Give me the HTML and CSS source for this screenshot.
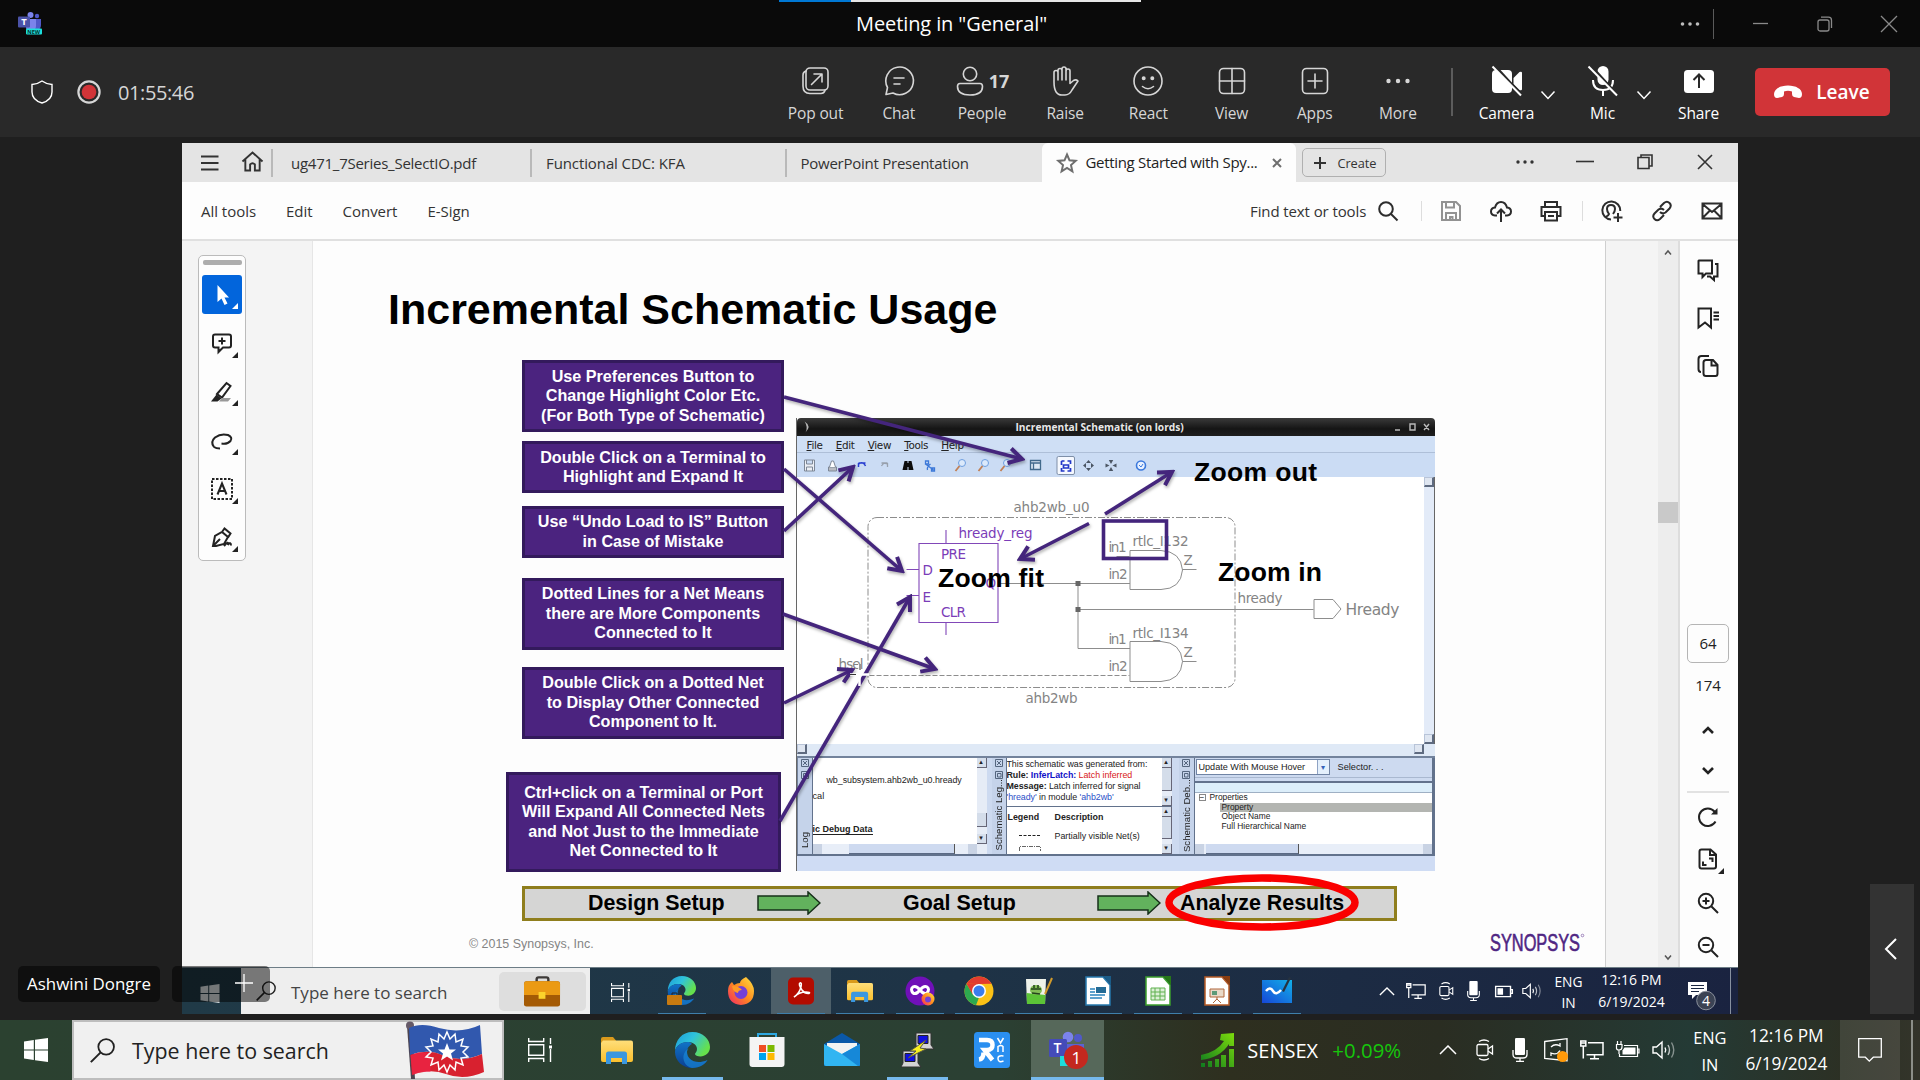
FILE: index.html
```html
<!DOCTYPE html>
<html lang="en">
<head>
<meta charset="utf-8">
<title>Meeting in "General"</title>
<link rel="stylesheet" href="styles.css">
</head>
<body>
<svg class="defs" width="0" height="0">
  <defs>
    <linearGradient id="edgeA" x1="0" y1="0" x2="1" y2="0.5"><stop offset="0" stop-color="#1c9bd8"/><stop offset=".5" stop-color="#2fc3dc"/><stop offset="1" stop-color="#66e04c"/></linearGradient>
    <linearGradient id="edgeB" x1="0" y1="0" x2="0" y2="1"><stop offset="0" stop-color="#1173c7"/><stop offset="1" stop-color="#0b3f91"/></linearGradient>
    <linearGradient id="fold" x1="0" y1="0" x2="0" y2="1"><stop offset="0" stop-color="#ffde7a"/><stop offset="1" stop-color="#fbc02d"/></linearGradient>
    <linearGradient id="fox" x1="1" y1="0" x2="0" y2="1"><stop offset="0" stop-color="#ffe443"/><stop offset=".5" stop-color="#ff8a1f"/><stop offset="1" stop-color="#f0246a"/></linearGradient>
    <linearGradient id="grow" x1="0" y1="1" x2="1" y2="0"><stop offset="0" stop-color="#0e7a1f"/><stop offset="1" stop-color="#7ddc0c"/></linearGradient>
    <linearGradient id="wb" x1="0" y1="1" x2="1" y2="0"><stop offset="0" stop-color="#1646d8"/><stop offset="1" stop-color="#12b0e8"/></linearGradient>
    <symbol id="edge" viewBox="0 0 36 36"><path d="M1 19C1 8 8 0 18.500 0 29 0 36 7.500 36 15c0 6-5 9.500-9.500 9.500-3 0-5.500-1-5.500-2.500 0-1 2-2 2-5 0-4-4-7-9-7C7 10 2 14 1 19z" fill="url(#edgeA)"/><path d="M14 10C6 10 1 15 1 20c0 9 8 16 17 16 8 0 13-4 15.500-8-3 1.500-6 2-9 2-7 0-11.500-4.500-11.500-10 0-4 2.500-6.500 5-8-1-1.500-3-2-4-2z" fill="url(#edgeB)"/><path d="M13 20c0 5.500 4.500 10 11.500 10 3 0 6-.5 9-2-2.500 4-7 8-15.500 8C11 35 8 27 10 22c1-3 3-5 6-6-2 1-3 2.500-3 4z" fill="#1a8fdd" opacity=".6"/></symbol>
    <symbol id="folder" viewBox="0 0 32 27"><path d="M0 2a2 2 0 0 1 2-2h10l3 3.500V8H0z" fill="#d99a1c"/><path d="M2 3.500h28a2 2 0 0 1 2 2V23a2 2 0 0 1-2 2H2a2 2 0 0 1-2-2V6z" fill="url(#fold)"/><path d="M5 27V17a2.500 2.500 0 0 1 2.500-2.500h16A2.500 2.500 0 0 1 26 17v10h-5v-6H10v6z" fill="#3a97e0"/></symbol>
    <symbol id="win" viewBox="0 0 24 24"><path d="M0 3.400 9.800 2v9.500H0zM11 1.800 24 0v11.500H11zM0 12.600h9.800V22L0 20.600zM11 12.600h13V24l-13-1.800z"/></symbol>
    <symbol id="glass" viewBox="0 0 24 24"><circle cx="15.500" cy="8.500" r="7.500" fill="none" stroke="currentColor" stroke-width="1.700"/><path d="M10 14 .8 23.200" stroke="currentColor" stroke-width="1.900"/></symbol>
    <symbol id="taskview" viewBox="0 0 24 24"><g fill="none" stroke="currentColor" stroke-width="1.400"><path d="M.7 0v3.500h15V0M.7 24v-3.500h15V24M.7 6.800h15v10.500H.7z"/><path d="M22.500 0v6M22.500 11v13"/></g><path d="M21 7.500h3v3h-3z" fill="currentColor"/></symbol>
    <symbol id="net" viewBox="0 0 24 24"><g fill="none" stroke="currentColor" stroke-width="1.500"><path d="M8 4.700h15v12H6.500M14.500 17v3.500M10 20.800h9M.8 3h5v5h-5zM3.300 8v12.500M.8 5h5"/></g></symbol>
    <symbol id="cam" viewBox="0 0 18 24"><g fill="none" stroke="currentColor" stroke-width="1.300"><rect x="1" y="6.500" width="11" height="11" rx="1.500"/><path d="m12 11 4.500-3v8L12 13M3 3.500Q8 .5 13 3.500M3 20.500q5 3 10 0"/></g></symbol>
    <symbol id="micro" viewBox="0 0 16 24"><rect x="3" y="0" width="10" height="17" rx="1.200" fill="currentColor"/><path d="M1 12v4.500Q1 20 5 20h6q4 0 4-3.500V12M8 20v3.300M4 23.300h8" fill="none" stroke="currentColor" stroke-width="1.300"/></symbol>
    <symbol id="vol" viewBox="0 0 24 24"><g fill="none" stroke="currentColor" stroke-width="1.400"><path d="M1 9h3.500L10 4v16l-5.500-5H1z"/><path d="M13 9.500q1.500 2.500 0 5"/><path d="M16 7q3 5 0 10" opacity=".7"/><path d="M19.500 4.500q4.500 7.500 0 15" opacity=".45"/></g></symbol>
    <symbol id="up" viewBox="0 0 18 10"><path d="m1 9 8-8 8 8" fill="none" stroke="currentColor" stroke-width="1.500"/></symbol>
    <symbol id="tri" viewBox="0 0 6 6"><path d="M6 0v6H0z" fill="currentColor"/></symbol>
    <symbol id="flow" viewBox="0 0 64 24"><path d="M1 5h50V1l12 11-12 11v-4H1z" fill="#62b25d" stroke="#16301a" stroke-width="1.500"/></symbol>
    <symbol id="dockbox" viewBox="0 0 8 20"><path d="M.5.500h7v7h-7zM2 2l4 4M6 2 2 6M.5 12.500h7v7h-7zM2.500 14.500h3.500v3.500H2.500z" fill="none" stroke="#55667f"/></symbol>
    <marker id="head" viewBox="0 0 20 20" refX="17" refY="10" markerWidth="20" markerHeight="20" markerUnits="userSpaceOnUse" orient="auto"><path d="M4 2.500 17 10 4 17.500" fill="none" stroke="#44257c" stroke-width="4"/></marker>
  </defs>
</svg>

<header class="titlebar">
  <div class="progress"><i></i><b></b></div>
  <svg class="teams-logo" viewBox="0 0 24 23"><circle cx="12.500" cy="3" r="3" fill="#7b83eb"/><circle cx="19" cy="4" r="2.200" fill="#5059c9"/><path d="M12 7h11v6q0 5-5 5h-6z" fill="#5059c9"/><path d="M9 7h9v7q0 5-6 5-3 0-4-3z" fill="#7b83eb"/><rect y="4.500" width="12" height="11" rx="1" fill="#4b53a8"/><text x="3.300" y="12.800" class="logo-t">T</text><rect x="8" y="16.500" width="16" height="6" rx="1" fill="#1ce0dc"/><text x="9.200" y="21.600" class="logo-new">NEW</text></svg>
  <h1>Meeting in "General"</h1>
  <div class="window-controls">
    <svg class="wc-dots" viewBox="0 0 20 6"><circle cx="2.500" cy="3" r="1.800"/><circle cx="10" cy="3" r="1.800"/><circle cx="17.500" cy="3" r="1.800"/></svg>
    <i class="wc-sep"></i>
    <svg class="wc" viewBox="0 0 16 16"><path d="M0 7.500h15"/></svg>
    <svg class="wc" viewBox="0 0 16 16"><rect x="1" y="4" width="11" height="11" rx="2"/><path d="M4 1.200h7.500q3 0 3 3V12"/></svg>
    <svg class="wc" viewBox="0 0 16 16"><path d="m0 0 16 16M16 0 0 16"/></svg>
  </div>
</header>

<div class="callbar">
  <div class="call-state">
    <svg class="shield" viewBox="0 0 22 24"><path d="M11 1Q6 4.500 1 4.500V12q0 8 10 11 10-3 10-11V4.500Q16 4.500 11 1z"/></svg>
    <svg class="rec" viewBox="0 0 24 24"><circle cx="12" cy="12" r="10.600" fill="none" stroke="#d6d6d6" stroke-width="2.200"/><circle cx="12" cy="12" r="7.300" fill="#d13438"/></svg>
    <time>01:55:46</time>
  </div>
  <nav class="call-actions">
    <button><svg viewBox="0 0 30 30"><rect x="5" y="2" width="22" height="22" rx="4"/><path d="M5 5Q2 6 2 9v11q0 7.500 7 7.500h11q3 0 4-3M10.500 18.500 21 8M13 8h8v8"/></svg><span>Pop out</span></button>
    <button><svg viewBox="0 0 30 30"><path d="M3.500 21.500A13.800 13.800 0 1 1 9 27l-7 1.500z"/><path d="M10 12h10M10 18h6"/></svg><span>Chat</span></button>
    <button><span class="with-count"><svg viewBox="0 0 30 30"><circle cx="15" cy="8" r="6.700"/><path d="M5 17.500h20q2.500 0 2.500 3Q27.500 29 15 29T2.500 20.500q0-3 2.500-3z"/></svg><b>17</b></span><span>People</span></button>
    <button><svg viewBox="0 0 30 30"><path d="M4 16V6.500a2 2 0 0 1 4 0V14 4.500a2 2 0 0 1 4 0V14 3a2 2 0 0 1 4 0v11V5a2 2 0 0 1 4 0v12.500l3.500-3q2.500-1.500 4.500.5-3 4.500-6 9-2.500 5-7 5h-3Q4 29 4 16z"/></svg><span>Raise</span></button>
    <button><svg viewBox="0 0 30 30"><circle cx="15" cy="15" r="14"/><path d="M9.500 20.500q5.500 4.500 11 0"/><circle cx="10.700" cy="12.200" r="1.200" class="solid"/><circle cx="19.300" cy="12.200" r="1.200" class="solid"/></svg><span>React</span></button>
    <button><svg viewBox="0 0 30 30"><rect x="2.500" y="2.500" width="25" height="25" rx="4"/><path d="M15 2.500v25M2.500 15h25"/></svg><span>View</span></button>
    <button><svg viewBox="0 0 30 30"><rect x="2.500" y="2.500" width="25" height="25" rx="4"/><path d="M15 8v14M8 15h14"/></svg><span>Apps</span></button>
    <button><svg viewBox="0 0 30 30"><g class="solid"><circle cx="5.500" cy="15" r="1.400"/><circle cx="15" cy="15" r="1.400"/><circle cx="24.500" cy="15" r="1.400"/></g></svg><span>More</span></button>
  </nav>
  <i class="call-sep"></i>
  <div class="devices">
    <button class="dev"><svg viewBox="0 0 30 30"><rect x="0" y="4" width="20" height="23" rx="4" class="fill"/><path d="m21.500 12 6-6q2.500-1 2.500 1v16q0 2-2.500 1l-6-6z" class="fill"/><path d="M2 -1 31 31" class="gap"/><path d="m.5.500 28.500 29"/></svg><span>Camera</span></button>
    <svg class="chev" viewBox="0 0 14 8"><path d="m.5.500 6.500 7 6.500-7"/></svg>
    <button class="dev"><svg viewBox="0 0 30 30"><rect x="9.500" y="0" width="11" height="19" rx="5.500" class="fill"/><path d="M5 14q0 10 10 10t10-10M15 24v6"/><path d="M2 -1 31 31" class="gap"/><path d="m.5.500 28.500 29"/></svg><span>Mic</span></button>
    <svg class="chev" viewBox="0 0 14 8"><path d="m.5.500 6.500 7 6.500-7"/></svg>
    <button class="dev"><svg viewBox="0 0 30 30"><rect x="0" y="4" width="30" height="23" rx="3.500" class="fill"/><path d="M15 22V9M9.500 14 15 8.500l5.500 5.500" class="dark"/></svg><span>Share</span></button>
  </div>
  <button class="leave"><svg viewBox="0 0 28 14"><path d="M14 .5C22 .5 28 4 28 9q0 4-3 4l-5-1q-2-.5-2-3V6.500q-4-1.500-8 0V9q0 2.500-2 3l-5 1q-3 0-3-4C0 4 6 .5 14 .5z"/></svg>Leave</button>
</div>

<main class="stage">
  <section class="shared">
    <div class="tabs">
      <svg class="burger" viewBox="0 0 18 16"><path d="M0 1.500h17.500M0 8h17.500M0 14.500h17.500"/></svg>
      <svg class="home" viewBox="0 0 24 22"><path d="M1.500 11 12 1.500 22.500 11M4.500 9v11.500H9.500V14q2.500-2.500 5 0v6.500h5V9"/></svg>
      <div class="tab t1">ug471_7Series_SelectIO.pdf</div>
      <div class="tab t2">Functional CDC: KFA</div>
      <div class="tab t3">PowerPoint Presentation</div>
      <div class="tab active"><svg class="star" viewBox="0 0 20 20"><path d="m10 1.500 2.500 5.800 6.200.6-4.700 4.200 1.400 6.200L10 15l-5.400 3.300L6 12.100 1.300 7.900l6.200-.6z"/></svg><span>Getting Started with Spy...</span><svg class="tab-x" viewBox="0 0 10 10"><path d="m1 1 8 8M9 1 1 9"/></svg></div>
      <div class="create"><svg viewBox="0 0 12 12"><path d="M6 0v12M0 6h12"/></svg>Create</div>
      <div class="pdf-wc">
        <svg viewBox="0 0 18 16"><g class="dots"><circle cx="2" cy="8" r="1.700"/><circle cx="9" cy="8" r="1.700"/><circle cx="16" cy="8" r="1.700"/></g></svg>
        <svg viewBox="0 0 18 16"><path d="M0 7.500h18"/></svg>
        <svg viewBox="0 0 18 16"><path d="M2 3.500h11v11H2zM5 3.500v-2.500h11v11h-3"/></svg>
        <svg viewBox="0 0 18 16"><path d="m2 1 14 14M16 1 2 15"/></svg>
      </div>
    </div>
    <div class="toolbar">
      <div class="tb-menu"><span>All tools</span><span>Edit</span><span>Convert</span><span>E-Sign</span></div>
      <div class="find">Find text or tools<svg viewBox="0 0 20 20"><circle cx="8" cy="8" r="6.800"/><path d="m13 13 6.500 6.500"/></svg></div>
      <i class="tb-sep s1"></i>
      <div class="tb-icons g1">
        <svg class="muted" viewBox="0 0 22 22"><path d="M2 2h14l4 4v14H2zM6 2v5.500h8V2M6 20v-7h10v7M10 20v-3h2.500v3"/></svg>
        <svg viewBox="0 0 22 22"><path d="M7 15.500H5Q1 15 1 11.500q0-3.500 4-4Q6.500 2 11 2t6 5.500q4 .5 4 4 0 3.500-4 4h-2M11 22V10M7 13.500l4-4 4 4"/></svg>
        <svg viewBox="0 0 22 22"><path d="M5 16H1.500V7h19v9H17M5 7V2h12v5M5 12h12v8.500H5zM8 16h6"/></svg>
      </div>
      <i class="tb-sep s2"></i>
      <div class="tb-icons g2">
        <svg viewBox="0 0 22 22"><path d="M10 19.500A9 9 0 1 1 19.300 11M4.500 17q3-1 3.500-3-2-2.500-2-5 0-4 4-4t4 4q0 2.500-2 5M17 13v9M12.500 17.500h9"/></svg>
        <svg viewBox="0 0 22 22"><path d="m9 7 4-4q3-2.500 5.500 0t0 5.500l-4 4q-3 2-5.500-.5M13 15l-4 4q-3 2.500-5.500 0t0-5.500l4-4q3-2 5.500.5"/></svg>
        <svg viewBox="0 0 22 22"><path d="M1.500 3.500h19v15h-19zM1.500 4 11 12l9.500-8M1.500 18l7-7M20.500 18l-7-7"/></svg>
      </div>
    </div>
    <div class="body">
      <aside class="gutter">
        <div class="toolbox">
          <i class="grip"></i>
          <div class="tool on"><svg viewBox="0 0 22 22"><path d="M6.500 1v17l4-3.500 3 6.500 3-1.500-3-6H18z" class="solid"/></svg><svg class="more"><use href="#tri"/></svg></div>
          <div class="tool"><svg viewBox="0 0 22 22"><path d="M4 2.500h14q2 0 2 2v9q0 2-2 2h-6L7.500 20v-4.500H4q-2 0-2-2v-9q0-2 2-2zM11 5.500v7M7.500 9h7"/></svg><svg class="more"><use href="#tri"/></svg></div>
          <div class="tool"><svg viewBox="0 0 22 22"><path d="M6 13 15.500 2l4 3L11 16.500z"/><path d="m5.500 13.500 5 4-4 3H0z" class="solid"/><path d="M11 17h9l-3 3.500H8z" fill="#999" stroke="none"/></svg><svg class="more"><use href="#tri"/></svg></div>
          <div class="tool"><svg viewBox="0 0 22 22"><path d="M3 17Q-1 12 4 7.500 10 3 17 5q5 2.500 2.500 6-3 3.500-9 2.500M3 17q2 1.500 6 1.500"/></svg><svg class="more"><use href="#tri"/></svg></div>
          <div class="tool"><svg viewBox="0 0 22 22"><rect x="1" y="1" width="20" height="20" stroke-dasharray="2.500 1.500"/><path d="m6.500 16.500 4.500-11 4.500 11M8 13h6"/></svg><svg class="more"><use href="#tri"/></svg></div>
          <div class="tool"><svg viewBox="0 0 22 22"><path d="m2 19 2-10 7-4 6 5-4 7-8 2zM2 19l7-7M11 5l2.500-3.500 6 5-2.500 4M13 19q5-6 4-1 3-4 3 .5"/></svg><svg class="more"><use href="#tri"/></svg></div>
        </div>
      </aside>

      <article class="slide">
        <h2>Incremental Schematic Usage</h2>
        <div class="figure">
          <div class="callouts">
            <p class="c1">Use Preferences Button to<br>Change Highlight Color Etc.<br>(For Both Type of Schematic)</p>
            <p class="c2">Double Click on a Terminal to<br>Highlight and Expand It</p>
            <p class="c3">Use “Undo Load to IS” Button<br>in Case of Mistake</p>
            <p class="c4">Dotted Lines for a Net Means<br>there are More Components<br>Connected to It</p>
            <p class="c5">Double Click on a Dotted Net<br>to Display Other Connected<br>Component to It.</p>
            <p class="c6">Ctrl+click on a Terminal or Port<br>Will Expand All Connected Nets<br>and Not Just to the Immediate<br>Net Connected to It</p>
          </div>
          <div class="appwin">
            <div class="aw-title"><svg class="moon" viewBox="0 0 12 14"><path d="M5 1q8 5 1 12 3-6-1-12z"/></svg><span>Incremental Schematic (on lords)</span><svg class="aw-wc" viewBox="0 0 34 10"><path d="M0 8h5M15 2h5v6h-5zM29 2l5 6M34 2l-5 6"/></svg></div>
            <div class="aw-menu"><span><u>F</u>ile</span><span><u>E</u>dit</span><span><u>V</u>iew</span><span><u>T</u>ools</span><span><u>H</u>elp</span></div>
            <svg class="aw-tools" viewBox="797 452 637 24">
              <g fill="none" stroke="#7d8796"><path d="M804 459h10v11h-10zM806 459v4h6v-4M806 470v-4h6v4" fill="#eceff5"/><path d="M828 466h8v4h-8z" fill="#b9bcc2"/><path d="M829 466l2-6h2l2 6" fill="#fff"/></g>
              <path d="M858 462h7M858 462v4M858 463q5-3 7 2" stroke="#2a3fd0" fill="none" stroke-width="1.500"/>
              <path d="M887 462h-6M887 462v4M887 463q-4-2-6 2" stroke="#98a0ac" fill="none" stroke-width="1.300"/>
              <path d="M902 469l2-9h3v2h1v-2h3l2 9h-5v-3h-1v3z" fill="#0c0c0c"/>
              <path d="M925 460h3v3h-3zM931 467h3v3h-3zM925 463l8 6M927 469q-1-3 3-6" stroke="#3c78d8" fill="none" stroke-width="1.300"/>
              <g fill="#dbe9fb" stroke="#6e9fe0"><circle cx="961.500" cy="462" r="3.500"/><circle cx="984.500" cy="462" r="3.500"/><circle cx="1006.500" cy="462" r="3.500"/></g>
              <path d="m959 465-4 5M982 465l-4 5M1004 465l-4 5" stroke="#c07f55" stroke-width="1.800"/>
              <path d="M1030 459.500h10v9h-10zM1030 462h10M1033 462v6" stroke="#426a8c" fill="#dce9f4" stroke-width="1.300"/>
              <rect x="1056.500" y="455.500" width="17.500" height="18" rx="1.500" fill="#f6f9ff" stroke="#7e8fa8"/>
              <path d="M1061 460h3M1067 460h3v3M1070 467v3h-3M1064 470h-3v-3M1061 464v-4M1063 464h5v3h-5z" stroke="#2237c8" fill="none" stroke-width="1.700"/>
              <g fill="#4b5563"><path d="m1088 459 2.500 3h-5zM1088 470l2.500-3h-5zM1082.500 464.500l3-2.500v5zM1093.500 464.500l-3-2.500v5z"/><path d="m1110.500 463 2.200-4h-4.400zM1110.500 466l2.200 4h-4.400zM1109 464.500l-4-2v4zM1112 464.500l4-2v4z"/></g>
              <circle cx="1140.500" cy="464.500" r="4.500" fill="#e9f1ff" stroke="#3b79dd" stroke-width="1.600"/><path d="M1138.500 464l2 2 2-3" fill="none" stroke="#3b79dd"/>
            </svg>
            <div class="aw-canvas">
              <svg class="schem" viewBox="797.500 476 627 267">
                <g fill="none" stroke="#8d8d8d">
                  <rect x="868.500" y="516.500" width="367" height="170" rx="9" stroke-dasharray="7 2 2 2"/>
                  <path d="M999 582.500h131.500M1078.500 582v65.500h52M1078.500 608.500h235.500M1117 555.500h13M1183 568.500h14M1183 660.500h14"/>
                  <path d="M870 674.500h260" stroke-dasharray="5 2"/>
                  <path d="M1130.500 549.500h31q20 1 21.500 19.500-1.500 19-21.500 19.500h-31zM1130.500 640.500h31q20 1 21.500 20-1.500 19-21.500 20h-31zM1314.500 598.500h19l8 9.500-8 9.500h-19z"/>
                </g>
                <path d="M1076 580h5v5h-5zM1076 606h5v5h-5z" fill="#666"/>
                <g class="sg">
                  <text x="1014" y="511" textLength="76">ahb2wb_u0</text><text x="1026" y="702" textLength="52">ahb2wb</text>
                  <text x="1109" y="551" textLength="18">in1</text><text x="1109" y="578" textLength="19">in2</text><text x="1133" y="545" textLength="56">rtlc_I132</text><text x="1184" y="564">Z</text>
                  <text x="1109" y="643" textLength="18">in1</text><text x="1109" y="670" textLength="19">in2</text><text x="1133" y="637" textLength="56">rtlc_I134</text><text x="1184" y="656">Z</text>
                  <text x="1238" y="602" textLength="45">hready</text><text x="1346" y="613.500" textLength="54" class="big">Hready</text><text x="839" y="668" textLength="25">hsel</text>
                </g>
                <path d="M919.500 542.500h79v79h-79zM946.500 529v13M946.500 621v13M907 568.500h12M907 594.500h12" fill="none" stroke="#8148b8" stroke-width="1.100"/>
                <g class="sp"><text x="959" y="537" textLength="74">hready_reg</text><text x="941.500" y="557.500" textLength="25">PRE</text><text x="923" y="573.500">D</text><text x="923" y="600.500">E</text><text x="941.500" y="616" textLength="25">CLR</text><text x="986" y="587">Q</text></g>
              </svg>
              <div class="vbar"><i></i><i></i></div>
            </div>
            <div class="hbar"><i></i><i></i></div>
            <div class="docks">
              <div class="strip"><svg><use href="#dockbox"/></svg><span>Log</span></div>
              <div class="dock log"><p class="l1">wb_subsystem.ahb2wb_u0.hready</p><p class="l2">cal</p><p class="l3"><span>ic Debug Data</span></p><div class="hs"><i></i></div></div>
              <div class="vs tall"><i>▴</i><b></b><i>▾</i></div>
              <div class="strip second"><svg><use href="#dockbox"/></svg><span>Schematic Leg...</span></div>
              <div class="split">
                <div class="row r1"><div class="msg">This schematic was generated from:<br><b>Rule: <em>InferLatch:</em></b> <s>Latch inferred</s><br><b>Message:</b> Latch inferred for signal<br><q>'hready'</q> in module <q>'ahb2wb'</q></div><div class="vs"><i>▴</i><b></b><i>▾</i></div></div>
                <div class="row r2"><div class="legend"><b>Legend</b><b>Description</b><svg viewBox="0 0 22 3"><path d="M0 1.500h22" stroke="#222" stroke-dasharray="3 1.500"/></svg><span>Partially visible Net(s)</span><svg viewBox="0 0 22 5"><path d="M.5 5V.5h21V5" fill="none" stroke="#666" stroke-dasharray="4 1 1 1"/></svg></div><div class="vs"><i>▴</i><b></b><i>▾</i></div></div>
              </div>
              <div class="strip third"><svg><use href="#dockbox"/></svg><span>Schematic Deb...</span></div>
              <div class="dock deb">
                <div class="combo-row"><div class="combo">Update With Mouse Hover<i>▾</i></div><span>Selector. . .</span></div>
                <div class="tree"><div class="th"></div><div class="tr root"><i>−</i>Properties</div><div class="tr"><span class="sel">Property</span></div><div class="tr"><span>Object Name</span></div><div class="tr"><span>Full Hierarchical Name</span></div><div class="hs wide"><i></i></div></div>
              </div>
            </div>
            <div class="aw-status"></div>
          </div>
        </div>
        <div class="steps"><b class="st1">Design Setup</b><svg class="f1"><use href="#flow"/></svg><b class="st2">Goal Setup</b><svg class="f2"><use href="#flow"/></svg><b class="st3">Analyze Results</b></div>
        <footer class="slide-foot"><span>© 2015 Synopsys, Inc.</span><svg class="syn" viewBox="0 0 95 26"><text x="0" y="18.500" textLength="90" lengthAdjust="spacingAndGlyphs">SYNOPSYS</text><circle cx="92.500" cy="3.500" r="1.300" fill="none" stroke="#8a6aad" stroke-width=".8"/></svg></footer>
        <svg class="notes" viewBox="313 241 1292 726">
          <g class="arrows"><path d="M784 397 1022 459"/><path d="M784 469 902 571"/><path d="M784 531 853 467"/><path d="M783 614 935 669"/><path d="M784 703 852 670"/><path d="M780 821 910 597"/><path d="M1105 514 1172 472"/><path d="M1089 523.500 1020 559"/></g>
          <rect x="1103.500" y="521" width="63" height="37.500" fill="none" stroke="#44257c" stroke-width="3.600"/>
          <path d="M850 674.500h8M861 674.500h8M859.500 664v8M859.500 677v9" stroke="#fff" stroke-width="2.500"/><path d="M850 674.500h6M860 664v6" stroke="#333"/>
          <g class="zt"><text x="1194" y="481" textLength="123">Zoom out</text><text x="1218" y="580.500" textLength="104">Zoom in</text><text x="938" y="586.500" textLength="106">Zoom fit</text></g>
          <ellipse cx="1262" cy="902.500" rx="93" ry="24.500" fill="none" stroke="#fa0000" stroke-width="7.500"/>
        </svg>
      </article>

      <div class="page-edge"></div>
      <div class="scroll"><svg viewBox="0 0 8 5"><path d="m1 4.500 3-3.500 3 3.500"/></svg><i></i><svg viewBox="0 0 8 5"><path d="m1 .5 3 3.500 3-3.500"/></svg></div>
      <aside class="rail">
        <svg class="ri" viewBox="0 0 22 22"><path d="M2 1.500h13v13H9L5.500 18v-3.500H1.500V2zM18 5h2.500v12.500H17V21l-4-3.500h-3"/></svg>
        <svg class="ri" viewBox="0 0 22 22"><path d="M1.500 1.500h12.500v19L8 15.500l-6.500 5zM16.500 5.500H22M16.500 9H22M16.500 12.500H22"/></svg>
        <svg class="ri" viewBox="0 0 22 22"><path d="M4 17Q1.500 17 1.500 14V4q0-3 3-3H12M9 5h7l4.500 5v8.500q0 2.500-2 2.500H9q-2.500 0-2.500-2.500V7.500Q6.500 5 9 5zM14.500 5v5.500h6"/></svg>
        <div class="pg">64</div>
        <div class="total">174</div>
        <svg class="nav n1" viewBox="0 0 12 8"><path d="m1 7 5-5 5 5"/></svg>
        <svg class="nav n2" viewBox="0 0 12 8"><path d="m1 1 5 5 5-5"/></svg>
        <i class="rule"></i>
        <svg class="ri z1" viewBox="0 0 22 22"><path d="M18.500 15.500A8.800 8.800 0 1 1 17.500 5.500L19 7"/><path d="M20.500 2v6.500H14z" class="tip"/></svg>
        <div class="fit"><svg class="ri" viewBox="0 0 22 22"><path d="M4.500 1.500h9l5.500 5v12q0 2-2 2H4.500q-2 0-2-2v-15q0-2 2-2zM13 2v5h5M12 10.500h3.500V14M9.500 17H6v-3.500"/></svg><svg class="more"><use href="#tri"/></svg></div>
        <svg class="ri z3" viewBox="0 0 22 22"><circle cx="9" cy="9" r="7.200"/><path d="m14.500 14.500 6.500 6.500M9 5.500v7M5.500 9h7"/></svg>
        <svg class="ri z4" viewBox="0 0 22 22"><circle cx="9" cy="9" r="7.200"/><path d="m14.500 14.500 6.500 6.500M5.500 9h7"/></svg>
      </aside>
    </div>

    <div class="task inner">
      <div class="start"><svg><use href="#win"/></svg></div>
      <div class="search"><svg class="g"><use href="#glass"/></svg><span>Type here to search</span><div class="hl"><svg viewBox="0 0 38 31"><path d="M13 6V3q0-2 2-2h8q2 0 2 2v3" fill="none" stroke="#3d3a38" stroke-width="2.500"/><rect y="5" width="37" height="26" rx="2.500" fill="#a45a05"/><path d="M0 8q0-3 3-3h31q3 0 3 3v11H0z" fill="#eb9a14"/><rect x="15" y="16" width="7" height="7" fill="#fbd22c"/></svg></div></div>
      <div class="tv"><svg><use href="#taskview"/></svg></div>
      <div class="apps">
        <span class="run"><svg viewBox="0 0 30 30"><use href="#edge" width="29" height="29"/><rect x="0" y="19" width="15" height="10" rx="1" fill="#c87a10"/><path d="M5 19v-2h5v2" fill="none" stroke="#222"/></svg></span>
        <span><svg viewBox="0 0 30 30"><path d="M20 1q8 7 8 14 0 13-13 14Q2 28 2 15 2 9 6 6l2 3q3-2 6-2 0-3 6-6z" fill="url(#fox)"/><circle cx="15" cy="16.500" r="6.500" fill="#7440d8"/><path d="M6 10q7 0 10 4-4 0-4 3-5-1-6-7z" fill="#ff9a26"/></svg></span>
        <span class="run lit"><svg viewBox="0 0 30 30"><rect x="2" y="1.500" width="26" height="27" rx="5" fill="#b30b00"/><path d="M8 21q5-3 7-10 1-5-1-4t2 7q3 4 7 3.500 2-1.500-3-1.500-7 0-12 5z" fill="none" stroke="#fff" stroke-width="1.500"/></svg></span>
        <span class="run"><svg viewBox="0 0 30 30"><use href="#folder" x="2" y="4" width="26" height="22"/></svg></span>
        <span class="run"><svg viewBox="0 0 30 30"><circle cx="15" cy="15" r="14.500" fill="#7010b8"/><path d="M15 14q-4-5-7-3t0 6q3 2 7-3 4-5 7-3t0 6q-3 2-7-3z" fill="none" stroke="#fff" stroke-width="3"/><circle cx="23" cy="23" r="6.500" fill="url(#fox)"/><circle cx="23" cy="23.500" r="3" fill="#7440d8"/></svg></span>
        <span class="run"><svg viewBox="0 0 30 30"><circle cx="15" cy="15" r="14.500" fill="#fbc116"/><path d="M2.500 7.700A14.500 14.500 0 0 1 27.500 7.700L15 8z" fill="#e33b2e"/><path d="M2.500 7.700 9 18.500l6 3-3 7.700A14.500 14.500 0 0 1 2.500 7.700z" fill="#2da94f"/><path d="M2.500 7.700h12L8.700 18.500z" fill="#e33b2e"/><circle cx="15" cy="15" r="7" fill="#fff"/><circle cx="15" cy="15" r="5.500" fill="#3b7ded"/></svg></span>
        <span class="run"><svg viewBox="0 0 30 30"><path d="M2 3h20l-1 25H3z" fill="#eef2ea"/><path d="M2.500 17 21.500 19l-.5 9H3z" fill="#5cc437"/><ellipse cx="12" cy="14" rx="6" ry="5" fill="#82bd55"/><path d="M7 13h10M8 17l8 1M10 9v3M14 9v3" stroke="#24441c" stroke-width="1.500"/><path d="m28 2-7 16" stroke="#d29b2c" stroke-width="2"/></svg></span>
        <span class="run"><svg viewBox="0 0 30 30"><path d="M3 1h17l7 8v20H3z" fill="#fff" stroke="#2678ad" stroke-width="1.500"/><path d="M20 0h8v9z" fill="#1b5c88"/><path d="M7 13h5M7 16h5M7 19h15M7 22h12" stroke="#2b84bd" stroke-width="1.500"/><path d="M13 11h10v6H13z" fill="#246b96"/></svg></span>
        <span class="run"><svg viewBox="0 0 30 30"><path d="M3 1h17l7 8v20H3z" fill="#fff" stroke="#3b9f2c" stroke-width="1.500"/><path d="M20 0h8v9z" fill="#267818"/><path d="M8 12h14v12H8zM8 16h14M8 20h14M12 12v12M17 12v12" stroke="#5fb04e" fill="#ddf0d7"/></svg></span>
        <span class="run"><svg viewBox="0 0 30 30"><path d="M3 1h17l7 8v20H3z" fill="#fff" stroke="#b75b26" stroke-width="1.500"/><path d="M20 0h8v9z" fill="#8a3d10"/><path d="M8 13h14v8H8zM15 21v2l-4 4M15 23l4 4" stroke="#b0663c" fill="#e8d9c8"/><path d="M10 15h5v4h-5z" fill="#5c9a78"/></svg></span>
        <span class="run"><svg viewBox="0 0 30 30"><rect y="4" width="30" height="23" fill="url(#wb)"/><path d="M4 15q4-5 7 0t8-1" fill="none" stroke="#fff" stroke-width="2.500"/><path d="m20 15 7-14 2 1-7 14z" fill="#26323f"/></svg></span>
      </div>
      <div class="tray">
        <svg class="i-up"><use href="#up"/></svg><svg class="i-net"><use href="#net"/></svg><svg class="i-cam"><use href="#cam"/></svg><svg class="i-mic"><use href="#micro"/></svg>
        <svg class="i-bat" viewBox="0 0 20 14"><path d="M1 1.500h16v11H1zM17 5h2v4h-2" fill="none" stroke="#fff" stroke-width="1.500"/><path d="M3 3.500h6v7H3z" fill="#fff"/></svg>
        <svg class="i-vol"><use href="#vol"/></svg>
      </div>
      <div class="lang">ENG<br>IN</div><div class="clock">12:16 PM<br>6/19/2024</div>
      <div class="note"><svg viewBox="0 0 30 30"><path d="M1 1h19v13H9l-4 4v-4H1z" fill="#fff"/><path d="M4 4.500h13M4 7.500h13M4 10.500h8" stroke="#1b2742" stroke-width="1.200"/><circle cx="19" cy="19.500" r="9.300" fill="#3b4354" stroke="#8a909c"/><text x="15" y="24.500">4</text></svg></div>
    </div>
  </section>
  <div class="collapse"><svg viewBox="0 0 12 22"><path d="M11 1 1 11l10 10"/></svg></div>
  <div class="name-chips"><span class="chip">Ashwini Dongre</span><span class="chip plus"><svg viewBox="0 0 18 18"><path d="M9 0v18M0 9h18"/></svg></span></div>
</main>

<footer class="task outer">
  <div class="start"><svg><use href="#win"/></svg></div>
  <div class="search"><svg class="g"><use href="#glass"/></svg><span>Type here to search</span>
    <svg class="flag" viewBox="0 0 78 58"><path d="M1 5h5l3 53H5z" fill="#4c4450"/><circle cx="4" cy="4.500" r="4" fill="#665a68"/><path d="M3 7q12-6 30 0 22 6 41-3l2 29q-20 9-38 2-16-8-34-1z" fill="#3158ae"/><path d="M4.500 34q18-7 34 1 18 7 37.500-2l2 18q-20 9-38 2-16-6-34 1z" fill="#d8212f"/><path d="M4.500 34q10-4 20-1.500V51q-9-1-18 3z" fill="#f4254d" opacity=".6"/><path d="m41 11 3 7 5-5 1 8 7-3-2 7 7 1-5 5 5 5-7 1 2 7-7-3-1 8-5-5-3 7-3-7-5 5-1-8-7 3 2-7-7-1 5-5-5-5 7-1-2-7 7 3 1-8 5 5z" fill="none" stroke="#fff" stroke-width="1.500"/><path d="m41 22 2.500 6.500h6.500l-5 4 2 7-6-4-6 4 2-7-5-4h6.500z" fill="#fff"/></svg>
  </div>
  <div class="tv"><svg><use href="#taskview"/></svg></div>
  <div class="apps">
    <span class="a0"><svg viewBox="0 0 36 36"><use href="#folder" x="2" y="5" width="32" height="27"/></svg></span>
    <span class="run"><svg viewBox="0 0 36 36"><use href="#edge" width="36" height="36"/></svg></span>
    <span><svg viewBox="0 0 36 36"><path d="M9 7V2h18v5" fill="none" stroke="#2ea7e0" stroke-width="2"/><path d="M.5 5h35v27q0 3-3 3h-29q-3 0-3-3z" fill="#f4f4f4"/><path d="M10 13h7v7h-7z" fill="#f04e24"/><path d="M18.500 13h7v7h-7z" fill="#7db900"/><path d="M10 21h7v7h-7z" fill="#00a2ed"/><path d="M18.500 21h7v7h-7z" fill="#fdb900"/></svg></span>
    <span><svg viewBox="0 0 36 36"><path d="M0 12 18 1l18 11v22H0z" fill="#0a58a8"/><path d="M3 11h30v12H3z" fill="#f2f2f2"/><path d="M0 12 18 22l18-10v20q0 2-2 2H2q-2 0-2-2z" fill="#31b5f2"/><path d="M18 22 36 12v20q0 2-2 2z" fill="#1688d8"/></svg></span>
    <span class="run"><svg viewBox="0 0 36 36"><path d="M17 1h15v12l3 4H18l-1-4zM4 19h15v12l3 4H2l2-4z" fill="#d4d4d4" stroke="#333"/><path d="M19 3.500h10v8H19zM6 21.500h10v8H6z" fill="#1010e0" stroke="#222"/><path d="m27 8-16 11 6 0-8 7 18-9-6-1z" fill="#f8f020" stroke="#554"/></svg></span>
    <span><svg viewBox="0 0 36 36"><rect width="36" height="36" rx="3.500" fill="#2a8ff0"/><path d="M5 8h8q5.500 0 5.500 5T13 18h-2.500l8 10M5 27.500q4.500-.5 4.500-7" fill="none" stroke="#fff" stroke-width="4.500"/><path d="m23.500 6 3 5 3-5M24 20v-5.500q3-2 5 0V20M29.500 24q-6-1-5.500 3t5.500 2" fill="none" stroke="#fff" stroke-width="1.500"/></svg></span>
    <span class="run lit"><svg viewBox="0 0 40 38"><circle cx="20" cy="6" r="5.300" fill="#7b83eb"/><circle cx="30" cy="7" r="4" fill="#5059c9"/><path d="M18 13h18v10q0 6-8 6H18z" fill="#5b63d2"/><rect x="1" y="8" width="18" height="18" rx="1.500" fill="#444bb8"/><text x="5.500" y="22" class="big-t">T</text><path d="M12 25h8v10h-8z" fill="#1cdcdc"/><circle cx="28" cy="26" r="12" fill="#c4281f"/><text x="23.500" y="32.500" class="badge">1</text></svg></span>
  </div>
  <div class="stock"><svg viewBox="0 0 34 34"><path d="M0 27v-5q16-3 23-14l-4-1 1-6 13-1v13h-5V11Q19 25 0 27zM0 30h4v4H0zM7 28h4v6H7zM14 26h4v8h-4zM20 22h5v12h-5zM28 16h5v18h-5z" fill="url(#grow)"/></svg><span>SENSEX</span><em>+0.09%</em></div>
  <div class="tray">
    <svg class="i-up"><use href="#up"/></svg><svg class="i-cam"><use href="#cam"/></svg><svg class="i-mic"><use href="#micro"/></svg>
    <svg class="i-sync" viewBox="0 0 24 24"><path d="M.7 3.500 23 .7v22L.7 20.500zM7 9q4-4 9-1v-3M16 12.500q-3 5-9 2.500v3" fill="none" stroke="#fff" stroke-width="1.300"/><circle cx="18.500" cy="18.500" r="5.500" fill="#ff9a0a"/></svg>
    <svg class="i-net"><use href="#net"/></svg>
    <svg class="i-bat" viewBox="0 0 24 18"><path d="M3.500 13v2.500H21.500v-11H8M21.500 8H23v4h-1.500" fill="none" stroke="#fff" stroke-width="1.200"/><path d="M8.500 6.500h11v7h-13V9.500z" fill="#fff"/><path d="M1.500 0v3M5 0v3M.5 3.500h5.500V6Q6 9 3 9T.5 6zM3 9v4" fill="none" stroke="#fff" stroke-width="1.200"/></svg>
    <svg class="i-vol"><use href="#vol"/></svg>
  </div>
  <div class="lang">ENG<br>IN</div><div class="clock">12:16 PM<br>6/19/2024</div>
  <div class="note"><svg viewBox="0 0 24 24"><path d="M.7.700h22.600v18.500h-8l-4 4-4-4H.7z" fill="none" stroke="#fff" stroke-width="1.300"/></svg></div>
</footer>
</body>
</html>
```
FILE: styles.css
```css
* { box-sizing: border-box; }
body { margin: 0; width: 1920px; height: 1080px; overflow: hidden; background: #1f1f1f; font-family: "Open Sans", "Noto Sans", sans-serif; display: flex; flex-direction: column; }
.defs { position: absolute; }
svg { display: block; flex: none; overflow: visible; }
i, b, em, span { flex: none; }
button { font: inherit; border: 0; background: none; padding: 0; color: inherit; }

/* Meeting title bar */
.titlebar { position: relative; height: 47px; flex: none; background: #0a0a0a; display: flex; align-items: center; color: #fff; }
.progress { position: absolute; top: 0; left: 779px; display: flex; height: 2px; }
.progress i { width: 72px; background: #0078d4; }
.progress b { width: 290px; background: #e6e6e6; }
.teams-logo { width: 24px; height: 23px; margin-left: 18px; }
.logo-t { font: 700 9.500px "Open Sans", sans-serif; fill: #fff; }
.logo-new { font: 700 5.500px "Open Sans", sans-serif; fill: #06302f; }
.titlebar h1 { margin: 0 0 1px 814px; font-size: 20px; font-weight: 400; letter-spacing: -.1px; width: 200px; white-space: nowrap; }
.window-controls { display: flex; align-items: center; margin-left: 624px; stroke: #8a8a8a; fill: none; stroke-width: 1.3; }
.wc-dots { width: 20px; height: 6px; fill: #bdbdbd; stroke: none; }
.wc-sep { width: 1px; height: 30px; background: #5a5a5a; margin: 0 39px 0 13px; }
.wc { width: 16px; height: 16px; margin-right: 48px; }
.wc:last-child { margin-right: 0; }

/* Call controls */
.callbar { height: 90px; flex: none; background: #292929; display: flex; align-items: center; color: #d6d6d6; }
.call-state { display: flex; align-items: center; width: 774px; padding-left: 31px; }
.shield { width: 22px; height: 24px; fill: none; stroke: #fff; stroke-width: 1.4; }
.rec { width: 24px; height: 24px; margin: 0 17px 0 24px; }
.call-state time { font-size: 20px; letter-spacing: -.4px; }
.call-actions { display: flex; font-size: 15.500px; }
.call-actions button, .dev { width: 83.200px; display: flex; flex-direction: column; align-items: center; gap: 5px; line-height: 24px; letter-spacing: -.15px; padding-top: 6.500px; }
.call-actions svg { width: 30px; height: 30px; fill: none; stroke: #d6d6d6; stroke-width: 1.6; stroke-linejoin: round; stroke-linecap: round; }
.solid { fill: currentColor; stroke: currentColor; }
.with-count { display: flex; align-items: center; gap: 3px; margin-left: 1px; }
.with-count b { font-size: 18px; line-height: 30px; width: 21px; }
.call-sep { width: 2px; height: 48px; background: #5c5c5c; margin-left: 11px; }
.devices { display: flex; align-items: center; color: #fff; font-size: 15.500px; margin-left: 17px; }
.dev { width: 74px; }
.dev svg { width: 30px; height: 30px; fill: none; stroke: #fff; stroke-width: 2; }
.dev .fill { fill: #fff; stroke: none; }
.dev .gap { stroke: #292929; stroke-width: 3; }
.dev .dark { stroke: #292929; stroke-width: 2; }
.chev { width: 14px; height: 8px; margin: 5px 10.500px 0 -2.500px; fill: none; stroke: #fff; stroke-width: 1.5; }
.leave { margin-left: 19px; width: 135px; height: 48px; border-radius: 5px; background: #d13438; color: #fff; font-size: 19px; font-weight: 600; display: flex; align-items: center; justify-content: center; gap: 14px; }
.leave svg { width: 28px; height: 14px; fill: #fff; }

/* Stage */
.stage { position: relative; height: 883px; flex: none; padding: 6px 6px 6px 182px; display: flex; justify-content: space-between; align-items: flex-end; }
.shared { width: 1556px; height: 871px; background: #fdfdfd; display: flex; flex-direction: column; overflow: hidden; }
.collapse { width: 44px; height: 130px; background: #333; display: flex; align-items: center; justify-content: center; padding-right: 2px; }
.collapse svg { width: 12px; height: 22px; fill: none; stroke: #fff; stroke-width: 2; }
.name-chips { position: absolute; left: 18px; bottom: 18px; display: flex; gap: 12px; }
.chip { width: 142px; height: 36px; border-radius: 5px; background: rgba(0, 0, 0, .5); color: #fff; font-size: 16.900px; line-height: 36px; text-align: center; }
.chip.plus { width: 98px; padding: 8px 0 0 63px; }
.chip.plus svg { width: 18px; height: 18px; stroke: #fff; stroke-width: 1.3; }

/* PDF reader chrome */
.tabs { height: 39px; flex: none; background: #e4e4e4; display: flex; align-items: center; font-size: 15px; color: #333; }
.tabs svg { fill: none; stroke: #333; stroke-width: 2; }
.tabs .dots { fill: #333; stroke: none; }
.burger { width: 18px; height: 16px; margin-left: 18.500px; }
.home { width: 23px; height: 21px; margin: 0 7px 2px 22px; }
.tab { height: 28px; border-left: 2px solid #b9b9b9; line-height: 29px; letter-spacing: -.25px; white-space: nowrap; }
.t1 { width: 259px; padding-left: 18.500px; letter-spacing: -.25px; }
.t2 { width: 255px; padding-left: 14.500px; letter-spacing: -.1px; }
.t3 { width: 257px; padding-left: 14px; }
.tab.active { width: 254px; height: 39px; background: #fdfdfd; border: 0; border-radius: 6px 6px 0 0; display: flex; align-items: center; padding-left: 15px; color: #222; letter-spacing: -.32px; }
.active span { width: 186px; margin-left: 9px; }
.star { width: 20px; height: 20px; }
.tabs .star, .tabs .tab-x { stroke: #6e6e6e; }
.tab-x { width: 10px; height: 10px; }
.create { width: 84px; height: 29px; margin-left: 6px; border: 1.500px solid #b0b0b0; border-radius: 5px; display: flex; align-items: center; padding-left: 11px; gap: 12px; font-size: 12.800px; letter-spacing: -.1px; }
.create svg { width: 12px; height: 12px; }
.pdf-wc { display: flex; margin: 0 0 2px 130px; gap: 42.300px; }
.pdf-wc svg { width: 18px; height: 16px; stroke-width: 1.6; }
.toolbar { height: 59px; flex: none; border-bottom: 2px solid #e0e0e0; display: flex; align-items: center; font-size: 15px; color: #333; letter-spacing: -.1px; }
.toolbar svg { fill: none; stroke: #2c2c2c; stroke-width: 2; width: 22px; height: 22px; }
.tb-menu { display: flex; gap: 30px; width: 1068px; padding-left: 19px; letter-spacing: -.03px; }
.find { display: flex; align-items: center; gap: 12px; width: 171px; white-space: nowrap; }
.toolbar .find svg { width: 20px; height: 20px; }
.tb-sep { width: 1px; height: 20px; background: #ddd; }
.tb-icons { display: flex; gap: 28px; }
.g1 { margin: 0 20px 0 18px; }
.g2 { margin-left: 18px; }
.toolbar .muted { stroke: #929292; }

.body { height: 726px; flex: none; display: flex; background: #f4f4f4; }
.gutter { width: 131px; border-right: 1px solid #e6e6e6; padding: 14px 0 0 16px; }
.toolbox { width: 48px; height: 306px; border: 1.500px solid #bbb; border-radius: 5px; background: #fdfdfd; display: flex; flex-direction: column; align-items: center; }
.grip { width: 39px; height: 5px; border-radius: 2px; background: #adadad; margin: 4px 0 10px; }
.tool { position: relative; flex: none; width: 40px; height: 39px; margin-bottom: 9.700px; border-radius: 3px; display: flex; align-items: center; justify-content: center; color: #222; }
.tool:last-child { margin-bottom: 0; }
.tool > svg { width: 22px; height: 22px; fill: none; stroke: #222; stroke-width: 2; }
.tool.on { background: #0265dc; color: #fff; }
.tool.on > svg { stroke: none; }
.tool .solid { stroke: none; fill: currentColor; }
.tool > .more, .fit .more { position: absolute; right: 4px; bottom: 5px; width: 6px; height: 6px; stroke: none; }

/* Slide */
.slide { position: relative; width: 1292px; height: 726px; background: #fdfdfd; display: flex; flex-direction: column; font-family: "Liberation Sans", Arial, sans-serif; }
.slide h2 { margin: 43px 0 0 75px; font-size: 43px; line-height: 50px; height: 84.500px; flex: none; color: #000; font-weight: 700; }
.figure { display: flex; height: 515px; flex: none; padding-left: 193px; }
.callouts { width: 289.500px; padding-left: 16px; margin-top: -8.500px; }
.callouts p { margin: 0; width: 262px; background: #4b237f; border: 3px solid #331a5c; color: #fff; font-weight: 700; font-size: 16.150px; line-height: 19.500px; text-align: center; white-space: nowrap; display: grid; align-content: center; }
.callouts .c1 { height: 72px; }
.callouts .c2 { height: 52px; margin-top: 9px; }
.callouts .c3 { height: 52px; margin-top: 12.500px; }
.callouts .c4 { height: 72px; margin-top: 20px; }
.callouts .c5 { height: 72px; margin-top: 17px; }
.callouts .c6 { width: 275px; height: 100px; margin: 33px 0 0 -16px; }
.appwin { width: 639px; height: 453px; margin-top: 49px; border-left: 1px solid #666; background: #fff; display: flex; flex-direction: column; }
.aw-title { height: 18px; background: linear-gradient(#3a3a3a, #151515 60%, #1e1e1e); border-radius: 4px 4px 0 0; display: flex; align-items: center; color: #e8e8e8; font: 700 10.200px "Open Sans", sans-serif; }
.moon { width: 11px; height: 14px; margin-left: 3px; fill: #b5b5b5; }
.aw-title span { width: 171px; margin-left: 205px; white-space: nowrap; }
.aw-wc { width: 34px; height: 10px; margin-left: 208px; fill: none; stroke: #bbb; stroke-width: 1.4; }
.aw-menu { height: 17px; background: #cfdff5; border-bottom: 1px solid #aebfd8; display: flex; padding: 2px 0 0 10px; gap: 13px; font: 10.400px/15px "DejaVu Sans", sans-serif; color: #222; letter-spacing: -.3px; }
.aw-tools { width: 638px; height: 24px; background: #cbdcf4; }
.aw-canvas { display: flex; height: 267px; }
.schem { width: 627px; height: 267px; }
.schem text { font-family: "DejaVu Sans", sans-serif; font-size: 13.500px; }
.schem text.big { font-size: 15.500px; }
.sg { fill: #848484; }
.sp { fill: #7b3db8; }
.vbar { width: 11px; background: #e3ebf8; display: flex; flex-direction: column; justify-content: space-between; border-right: 1px solid #666; }
.vbar i, .hbar i { width: 10px; height: 10px; background: #dfe6f1; border: 1px solid #b8c4d8; border-right: 2px solid #5f6b80; border-bottom: 2px solid #5f6b80; }
.hbar { height: 12px; background: #dfe9f6; display: flex; justify-content: space-between; padding-right: 11px; }
.docks { height: 100px; display: flex; background: #cddaf0; border-top: 2px solid #73839c; border-bottom: 2px solid #62728c; font: 9.200px "Liberation Sans", sans-serif; color: #222; }
.docks p { margin: 0; }
.aw-status { height: 15px; background: #cfdcf4; }
.strip { width: 15px; flex: none; display: flex; flex-direction: column; align-items: center; justify-content: space-between; padding: 1px 0 5px; border-left: 1px solid #73839c; background: #c5d3ea; }
.strip svg { width: 8px; height: 20px; }
.strip span { writing-mode: vertical-rl; transform: rotate(180deg); font-size: 9.600px; line-height: 13px; }
.strip.second { margin-left: 5px; width: 14px; border: 0; }
.strip.third { margin-left: 7px; width: 15px; border: 0; }
.dock { background: #fff; }
.log { width: 165px; border-left: 1px solid #62728c; display: flex; flex-direction: column; }
.log .l1 { margin: 17px 0 0 14px; font-size: 8.900px; letter-spacing: -.05px; }
.log .l2 { margin-top: 6px; }
.log .l3 { margin: 23px 0 9px; font-weight: 700; font-size: 9px; }
.l3 span { border-bottom: 1px solid #222; }
.hs { height: 10px; margin-top: auto; background: #e8eef8; border-left: 9px solid #c9d3e4; border-right: 9px solid #c9d3e4; }
.hs i { display: block; width: 106px; height: 10px; margin-left: 27px; background: #cedaf0; border-right: 1.500px solid #555; border-bottom: 1.500px solid #5b6a84; }
.vs { width: 10px; flex: none; background: #e6ecf6; display: flex; flex-direction: column; align-items: stretch; justify-content: space-between; }
.vs i { height: 10px; background: #d6dfec; font: 7px/9px "DejaVu Sans", sans-serif; text-align: center; border-right: 1.500px solid #667; border-bottom: 1.500px solid #667; }
.vs b { flex: 1; background: #d4ddea; border-right: 1.500px solid #667; border-bottom: 1.500px solid #667; margin-bottom: 5px; }
.vs.tall b { margin: 45px 0 7px; }
.vs.tall { padding-bottom: 10px; }
.split { width: 166px; display: flex; flex-direction: column; border-left: 1px solid #62728c; }
.row { display: flex; flex: 1; background: #fff; justify-content: space-between; overflow: hidden; }
.r1 { border-bottom: 1.500px solid #62728c; flex: 0 0 49px; }
.msg { white-space: nowrap; line-height: 11px; font-size: 8.900px; letter-spacing: -.05px; padding-top: 1px; width: 154px; }
.msg em { color: #1010c8; font-style: normal; }
.msg s { color: #d82020; text-decoration: none; }
.msg q { color: #2b50c8; quotes: none; }
.legend { display: grid; grid-template-columns: 47px 100px; grid-template-rows: 20px 18px 8px; align-items: center; padding-left: 1px; white-space: nowrap; font-size: 8.900px; }
.legend svg { width: 22px; margin-left: 11px; }
.deb { width: 241px; background: #cddaf0; border-right: 3px solid #62728c; border-left: 1px solid #62728c; display: flex; flex-direction: column; }
.combo-row { height: 20px; display: flex; align-items: center; gap: 8px; padding-left: 1px; border-bottom: 1px solid #a9b8d0; }
.combo { width: 134px; height: 16px; background: #fff; border: 1px solid #7084a4; line-height: 15px; padding-left: 2px; display: flex; justify-content: space-between; font-size: 9.100px; white-space: nowrap; }
.combo i { width: 12px; border-left: 1px solid #8fa3c4; background: #e4f0fc; color: #3563b8; text-align: center; font-style: normal; font-size: 8px; }
.tree { margin-top: 3.500px; flex: 1; background: #fff; border-top: 2px solid #62728c; display: flex; flex-direction: column; font-size: 8.400px; }
.th { height: 10px; background: #dceefa; border-bottom: 1px solid #9fb0c4; }
.tr { height: 9.500px; line-height: 9.500px; padding-left: 19px; display: flex; }
.tr span { border-left: 6px solid transparent; background-clip: padding-box; padding-left: 2px; flex: 1; }
.tr .sel { background-color: #b3b5b1; }
.root { padding-left: 4px; gap: 4px; }
.root i { width: 7px; height: 7px; border: 1px solid #888; line-height: 5px; font-style: normal; margin-top: 1px; }
.wide i { width: 93px; margin-left: 2px; }
.steps { width: 875px; height: 35px; flex: none; margin: 2px 0 0 209px; background: #d5d5d4; border: 3px solid #8f7e1d; display: flex; align-items: center; font-size: 21.400px; color: #000; padding-left: 63px; white-space: nowrap; }
.st1 { width: 169px; }
.st2 { width: 194px; }
.steps svg { width: 64px; height: 24px; }
.f1 { margin-right: 82px; }
.f2 { margin-right: 19px; }
.slide-foot { display: flex; justify-content: space-between; padding: 11px 20px 0 156px; font-size: 12.450px; color: #848484; }
.slide-foot > span { padding-top: 5px; }
.syn { width: 95px; height: 26px; }
.syn text { font: 400 24px "Liberation Sans", sans-serif; fill: #4f2683; stroke: #4f2683; stroke-width: .6; }
.notes { position: absolute; inset: 0; width: 1292px; height: 726px; }
.arrows { fill: none; stroke: #44257c; stroke-width: 3.6; filter: drop-shadow(1px 2px 1.500px rgba(0, 0, 0, .3)); }
.arrows path { marker-end: url(#head); }
.zt { font: 700 26.500px "Liberation Sans", sans-serif; fill: #000; }

.page-edge { width: 53px; border-left: 1px solid #cfcfcf; }
.scroll { width: 20px; background: #ededed; display: flex; flex-direction: column; align-items: center; padding: 9px 0 7px; }
.scroll svg { width: 8px; height: 5px; fill: none; stroke: #555; stroke-width: 1.5; }
.scroll i { width: 20px; height: 21px; background: #c9c9c9; margin: 247px 0 auto; }
.rail { width: 60px; background: #fdfdfd; border-left: 2px solid #ddd; display: flex; flex-direction: column; align-items: center; font-size: 15px; color: #222; padding: 18px 2px 0 0; }
.ri { width: 22px; height: 22px; fill: none; stroke: #222; stroke-width: 2; margin-bottom: 26px; }
.tip { fill: #222; stroke: none; }
.pg { width: 42px; height: 39px; border: 1.500px solid #b5b5b5; border-radius: 5px; text-align: center; line-height: 37px; margin-top: 221px; }
.total { line-height: 20px; margin: 12px 0 31px; }
.nav { width: 12px; height: 8px; fill: none; stroke: #222; stroke-width: 2.6; }
.n2 { margin: 33px 0 16px; }
.rule { width: 42px; height: 2px; background: #e2e2e2; margin-bottom: 13px; }
.rail .z1 { margin-bottom: 20px; }
.fit { position: relative; margin-bottom: 22px; }
.fit .ri { margin: 0; }
.fit .more { right: -5px; bottom: -4px; }
.rail .z3 { margin-bottom: 22px; }
.rail .z4 { margin: 0; }

/* Task bars */
.task { display: flex; color: #fff; flex: none; white-space: nowrap; }
.start { display: flex; align-items: center; fill: #fff; }
.search { display: flex; align-items: center; background: #f0f0f0; color: #222; }
.apps { display: flex; }
.apps span { display: flex; align-items: center; justify-content: center; }
.tray, .stock { display: flex; align-items: center; }
.lang, .clock { text-align: center; }

.inner { height: 47px; background: linear-gradient(90deg, #203a47, #1e3346 50%, #1a2340); border-top: 1px solid #6d7d86; }
.inner .start { width: 59px; padding-left: 18px; fill: #e8eef0; }
.inner .start svg { width: 20px; height: 19px; margin-top: 4px; }
.inner .search { width: 349px; padding-left: 15px; background: #eee; }
.inner .search .g { width: 20px; height: 20px; }
.inner .search span { font-size: 17px; width: 223px; padding-left: 15px; color: #444; padding-top: 3px; }
.hl { width: 87px; height: 39px; border-radius: 5px; background: #dedede; display: flex; align-items: center; justify-content: center; }
.hl svg { width: 37px; height: 31px; }
.inner .tv { padding: 15px 0 0 20px; width: 59px; }
.inner .tv svg { width: 21px; height: 19px; }
.inner .apps { margin-left: 3px; }
.inner .apps span { width: 59.500px; }
.inner .apps svg { width: 30px; height: 30px; margin-bottom: 1px; }
.inner .run { background: linear-gradient(#3f7fab, #3f7fab) 50% 100% / 48px 1px no-repeat; }
.inner .lit { background-color: #4d5f69; }
.inner .tray { margin-left: 72px; width: 173px; }
.inner .i-up { width: 16px; height: 9px; }
.inner .i-net { width: 20px; height: 20px; margin-left: 11px; }
.inner .i-cam { width: 15px; height: 20px; margin-left: 13px; }
.inner .i-mic { width: 15px; height: 20px; margin-left: 12px; }
.inner .i-bat { width: 20px; height: 13px; margin-left: 13px; }
.inner .i-vol { width: 20px; height: 20px; margin-left: 8px; }
.inner .lang { width: 34px; font-size: 13.800px; line-height: 21px; padding-top: 3px; }
.inner .clock { width: 90px; font-size: 14px; line-height: 22px; padding-top: 1px; margin-left: 1px; }
.inner .note { padding: 13px 0 0 10px; width: 54px; border-right: 1px solid #8790a0; }
.inner .note svg { width: 30px; height: 30px; }
.note text { font-size: 14px; fill: #fff; }

.outer { height: 60px; background: linear-gradient(90deg, #2b4130, #2b4033 52%, #2e2f1f 64%, #2a2d22 75%, #243a35 88%, #2c3024 96%, #33342a); }
.outer .start { width: 72px; padding-left: 24px; }
.outer .start svg { width: 24px; height: 24px; }
.outer .search { width: 432px; border: 2px solid #bdbdbd; padding-left: 16px; }
.outer .search .g { width: 25px; height: 25px; }
.outer .search span { font-size: 21.400px; width: 291px; padding-left: 17px; padding-top: 1px; }
.flag { width: 78px; height: 58px; }
.outer .tv { padding: 18px 0 0 24px; width: 76px; }
.outer .tv svg { width: 24px; height: 24px; }
.outer .apps span { width: 74.900px; }
.outer .apps .lit { width: 73px; margin-left: 2px; background-color: #56685a; background-size: 73px 3px; }
.outer .apps svg { width: 36px; height: 36px; }
.outer .apps .lit svg { width: 40px; height: 38px; }
.outer .run { background: linear-gradient(#76b9ed, #76b9ed) 50% 100% / 61px 3px no-repeat; }
.big-t { font-size: 14px; font-weight: 600; fill: #fff; }
.badge { font-size: 17px; fill: #fff; }
.stock { margin-left: 97px; width: 238px; font-size: 20px; }
.stock svg { width: 34px; height: 34px; }
.stock span { width: 85px; margin-left: 12px; }
.stock em { font-style: normal; color: #16c60c; font-size: 20.400px; }
.outer .tray { width: 250px; }
.outer .i-up { width: 18px; height: 10px; }
.outer .i-cam { width: 18px; height: 24px; margin-left: 19px; }
.outer .i-mic { width: 16px; height: 24px; margin-left: 18px; }
.outer .i-sync, .outer .i-net, .outer .i-vol { width: 24px; height: 24px; margin-left: 12px; }
.outer .i-sync { margin-left: 16px; }
.outer .i-bat { width: 24px; height: 18px; margin-left: 12px; }
.outer .lang { width: 41px; font-size: 16.400px; line-height: 27px; padding-top: 4px; }
.outer .clock { width: 110px; font-size: 17.300px; line-height: 28px; padding: 2px 0 0 2px; }
.outer .note { width: 60px; background: rgba(255, 255, 255, .1); display: flex; align-items: center; justify-content: center; }
.outer .note svg { width: 24px; height: 24px; }
.outer::after { content: ""; width: 2px; background: #8c8f88; margin-left: 11px; }
```
